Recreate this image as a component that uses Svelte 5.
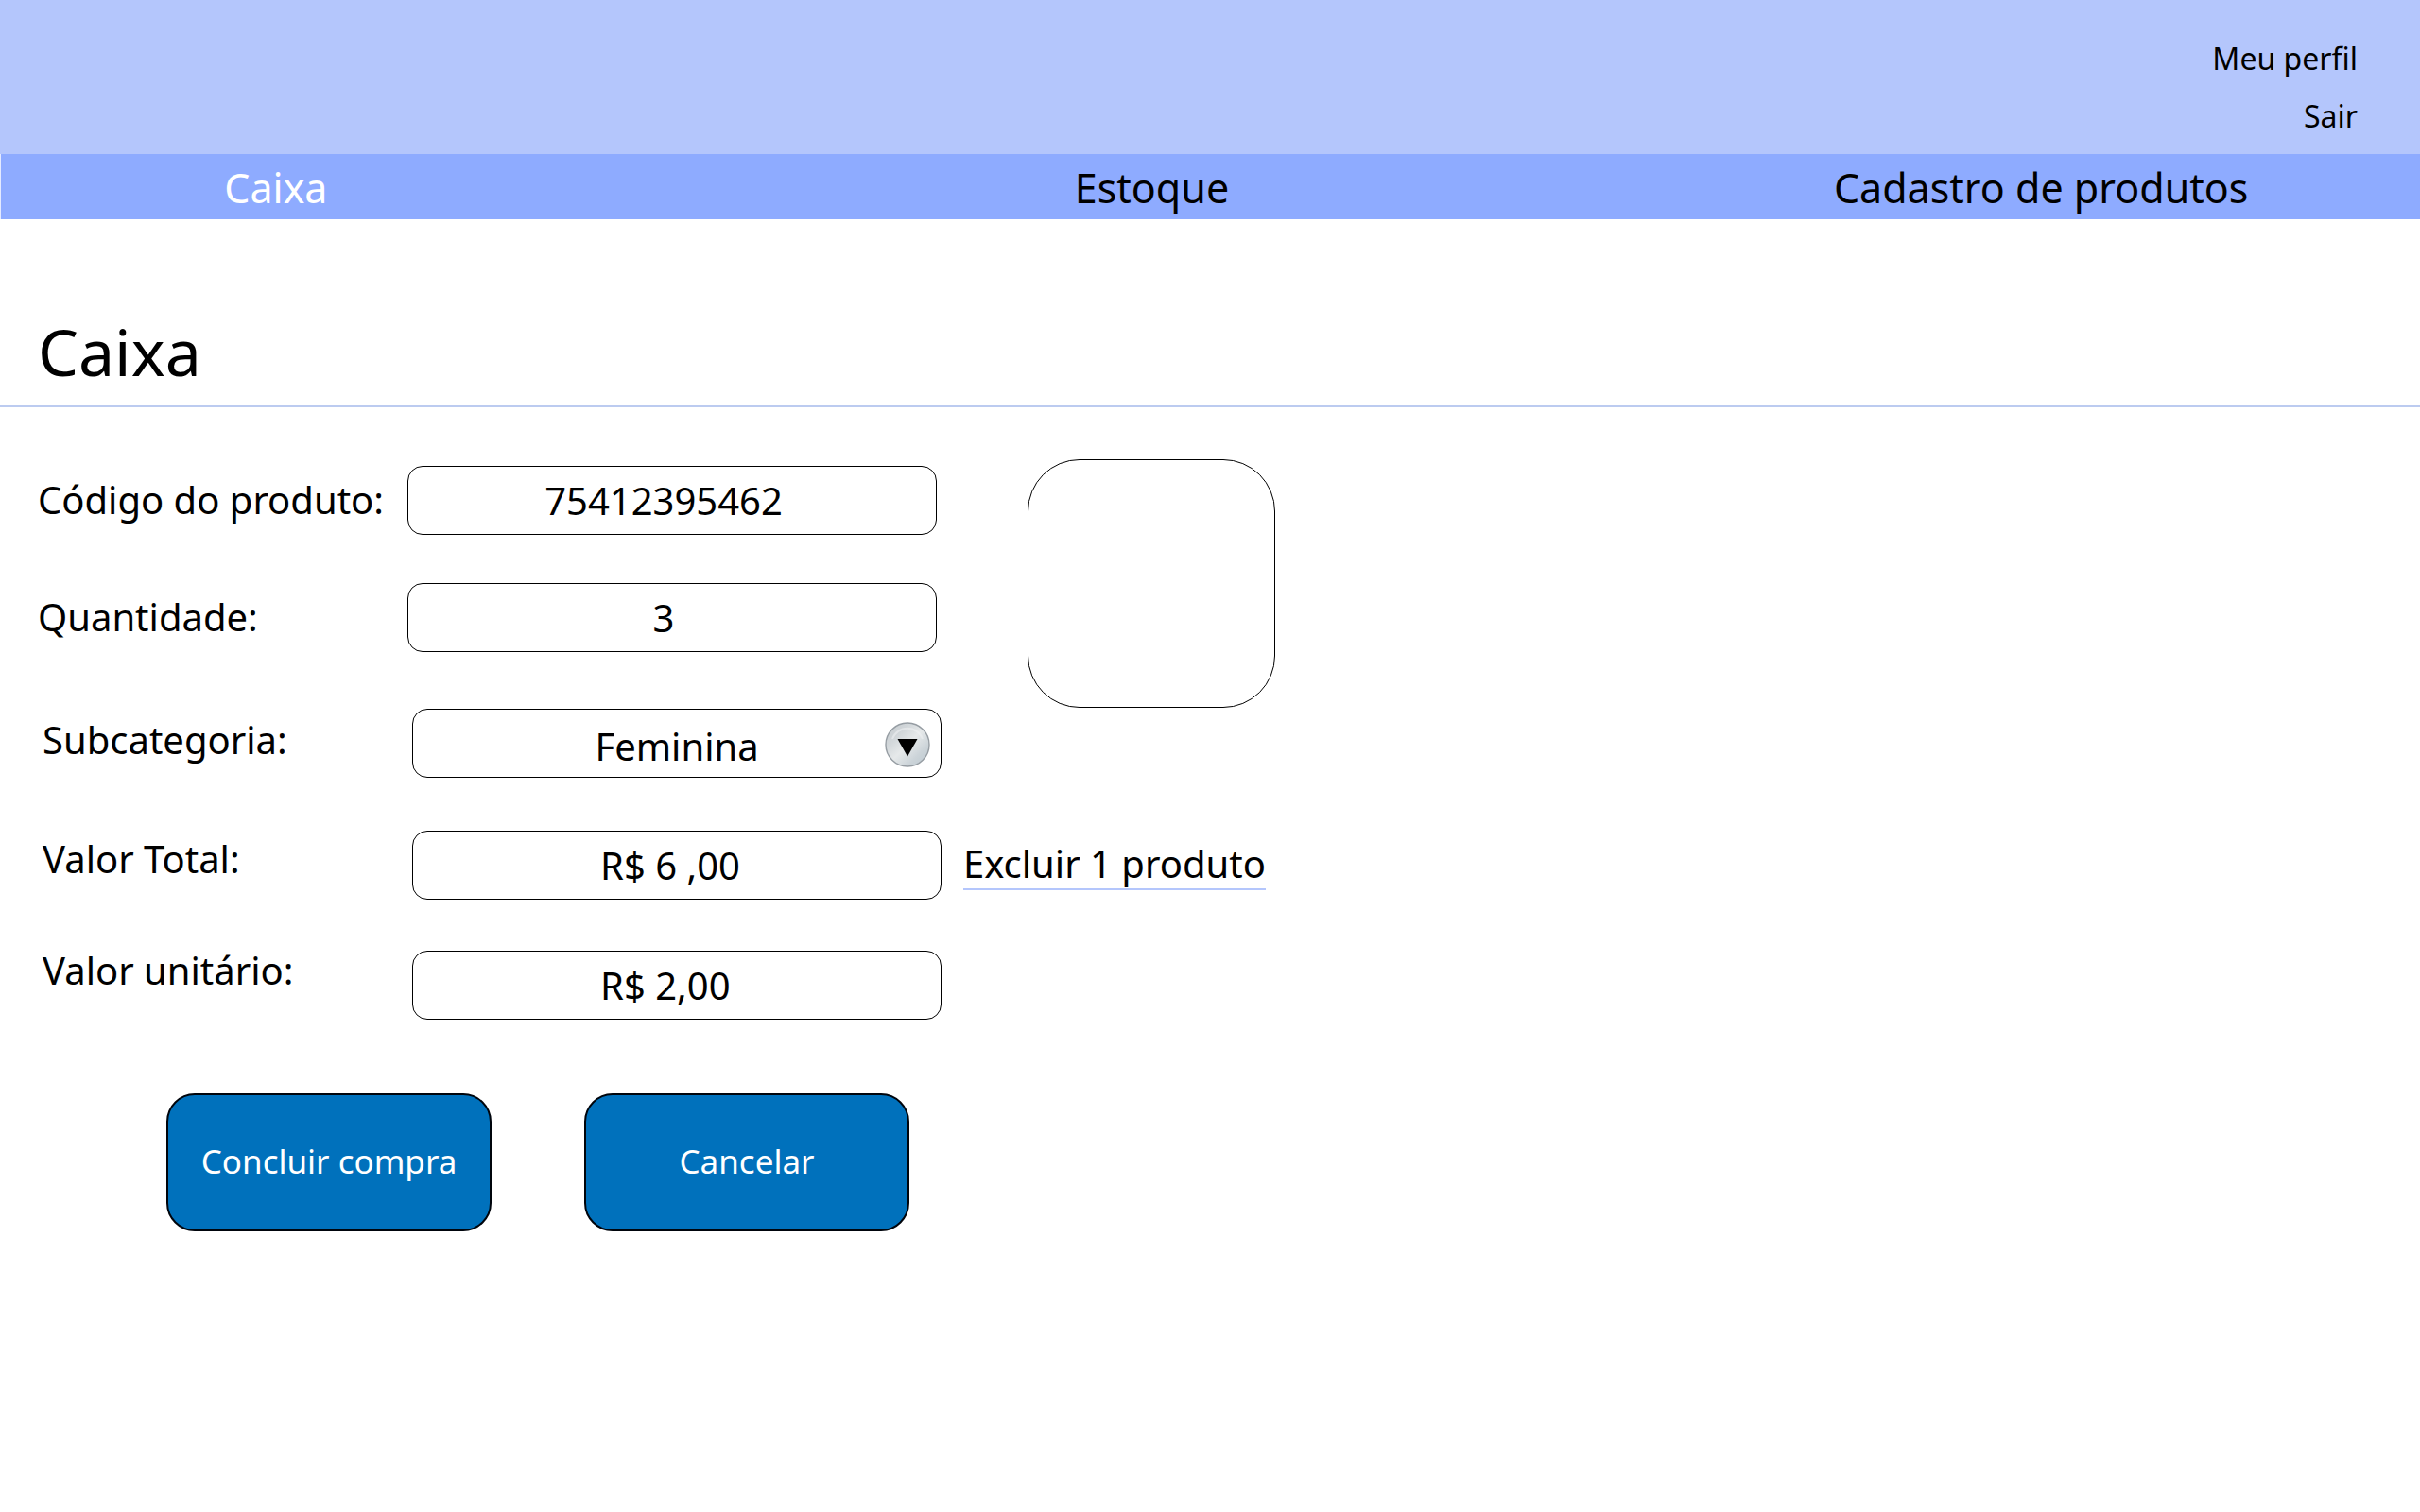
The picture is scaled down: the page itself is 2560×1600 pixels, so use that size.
<script>
  let codigo = $state('75412395462');
  let quantidade = $state('3');
  let subcategoria = $state('Feminina');
  let total = $state('R$ 6 ,00');
  let unitario = $state('R$ 2,00');
</script>

<div class="page">
  <header class="top">
    <a href="#perfil">Meu perfil</a>
    <a href="#sair">Sair</a>
  </header>

  <nav class="menu">
    <a href="#caixa" class="active" aria-current="page">Caixa</a>
    <a href="#estoque">Estoque</a>
    <a href="#cadastro">Cadastro de produtos</a>
  </nav>

  <main>
    <h1>Caixa</h1>

    <form onsubmit={(e) => e.preventDefault()}>
      <div class="upper">
        <div class="fields">
          <div class="row">
            <label for="codigo">Código do produto:</label>
            <input id="codigo" class="box" type="text" bind:value={codigo} />
          </div>
          <div class="row">
            <label for="quantidade">Quantidade:</label>
            <input id="quantidade" class="box" type="text" bind:value={quantidade} />
          </div>
          <div class="row detail category">
            <label for="subcategoria">Subcategoria:</label>
            <div class="picker">
              <select id="subcategoria" class="box" bind:value={subcategoria}>
                <option>Feminina</option>
                <option>Masculina</option>
              </select>
              <svg class="arrow" viewBox="0 0 48 48" aria-hidden="true">
                <defs>
                  <linearGradient id="metal" x1="0" y1="0" x2="1" y2="1">
                    <stop offset="0" stop-color="#c3c9cd" />
                    <stop offset="0.3" stop-color="#d3d8db" />
                    <stop offset="0.5" stop-color="#e6e9ea" />
                    <stop offset="0.75" stop-color="#cbd3d8" />
                    <stop offset="1" stop-color="#bcc9d1" />
                  </linearGradient>
                </defs>
                <circle cx="24" cy="24" r="23" fill="url(#metal)" stroke="#969da3" stroke-width="1.4" />
                <path d="M8 18a17 17 0 0 1 32 0" fill="none" stroke="#eef0f1" stroke-width="2" opacity="0.6" />
                <path d="M13.5 18h21L24 36.500z" fill="#000" />
              </svg>
            </div>
          </div>
        </div>
        <div class="preview" role="img" aria-label="Imagem do produto"></div>
      </div>

      <div class="row detail total">
        <label for="total">Valor Total:</label>
        <input id="total" class="box money" type="text" bind:value={total} />
        <a class="remove" href="#excluir">Excluir 1 produto</a>
      </div>
      <div class="row detail unit">
        <label for="unitario">Valor unitário:</label>
        <input id="unitario" class="box money" type="text" bind:value={unitario} />
      </div>

      <div class="actions">
        <button type="submit">Concluir compra</button>
        <button type="button">Cancelar</button>
      </div>
    </form>
  </main>
</div>

<style>
  :global(body) {
    margin: 0;
    background: #fff;
  }

  .page {
    font-family: 'Noto Sans', 'Open Sans', sans-serif;
    font-size: 40px;
    color: #000;
  }

  a {
    color: inherit;
    text-decoration: none;
  }

  .top {
    display: flex;
    flex-direction: column;
    align-items: flex-end;
    padding: 31px 66px 10px;
    background: #b4c6fc;
    font-size: 32px;
    line-height: 61px;
  }

  .menu {
    display: grid;
    grid-template-columns: 582fr 1272fr 610fr;
    justify-items: center;
    padding: 3px 96px 0 0;
    border-left: 1px solid #e4eaff;
    background: #8eabff;
    font-size: 43px;
    line-height: 66px;
  }

  .active {
    color: #fff;
  }

  h1 {
    margin: 0;
    padding: 94px 40px 11px;
    border-bottom: 2px solid #bccbf0;
    font-size: 68px;
    font-weight: 400;
    line-height: 92px;
  }

  form {
    padding: 55px 40px 80px;
  }

  .upper {
    display: flex;
    align-items: flex-start;
    gap: 91px;
  }

  .fields {
    display: flex;
    flex-direction: column;
    gap: 51px;
    padding-top: 7px;
  }

  .row {
    display: grid;
    grid-template-columns: 391px 560px auto;
    justify-content: start;
    align-items: start;
  }

  .detail {
    padding-left: 5px;
  }

  .category {
    padding-top: 9px;
  }

  .total {
    margin-top: 56px;
  }

  .unit {
    margin-top: 54px;
  }

  label {
    line-height: 72px;
  }

  .category label {
    line-height: 66px;
  }

  .total label {
    line-height: 60px;
  }

  .unit label {
    line-height: 42px;
  }

  .box {
    box-sizing: border-box;
    width: 100%;
    height: 73px;
    margin: 0;
    padding: 0 18px 0 0;
    border: 1px solid #000;
    border-radius: 16px;
    background: #fff;
    color: #000;
    font: inherit;
    text-align: center;
  }

  .money {
    padding: 0 0 0 198px;
    text-align: left;
  }

  .picker {
    position: relative;
  }

  select.box {
    display: block;
    padding: 6px 0 0;
    appearance: none;
    text-align-last: center;
  }

  .arrow {
    position: absolute;
    top: 14px;
    right: 12px;
    width: 48px;
    height: 48px;
    pointer-events: none;
  }

  .preview {
    box-sizing: border-box;
    width: 262px;
    height: 263px;
    border: 1px solid #000;
    border-radius: 55px;
  }

  .remove {
    margin-left: 23px;
    padding: 9px 0 0;
    border-bottom: 2px solid #b4c6fc;
    line-height: 52px;
  }

  .actions {
    display: flex;
    gap: 98px;
    padding: 78px 136px 0;
  }

  button {
    box-sizing: border-box;
    width: 344px;
    height: 146px;
    padding: 0 0 4px;
    border: 2px solid #00050c;
    border-radius: 30px;
    background: #0071bc;
    color: #fff;
    font: inherit;
    font-size: 35px;
    white-space: nowrap;
  }
</style>
